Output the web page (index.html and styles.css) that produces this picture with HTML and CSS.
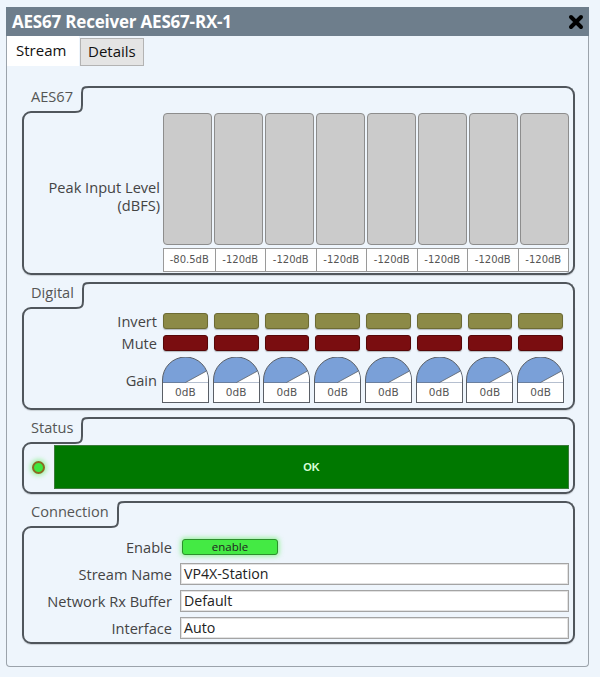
FILE: index.html
```html
<!DOCTYPE html>
<html lang="en">
<head>
    <meta charset="UTF-8">
    <title>AES67 Receiver AES67-RX-1</title>
    <link rel="stylesheet" href="styles.css">
</head>
<body>

    <div class="window">
        <div class="titlebar">
            <span class="title">AES67 Receiver AES67-RX-1</span>
            <svg class="close" viewBox="0 0 16 16" width="16" height="16">
                <path d="M3 3 L13 13 M13 3 L3 13" stroke="#000" stroke-width="4" stroke-linecap="round"/>
            </svg>
        </div>

        <div class="tabs">
            <div class="tab active">Stream</div>
            <div class="tab">Details</div>
        </div>

        <div class="content">

            <!-- AES67 meters -->
            <section class="grp">
                <div class="grp-head">
                    <span class="grp-name">AES67</span>
                    <svg class="step" viewBox="0 0 14 27" width="14" height="27">
                        <path d="M0 27 L0 25 C6 25 7 24 7 19 L7 7 C7 2 8 1 14 1 L14 27 Z" fill="#eef5fc"/>
                        <path d="M0 26 C6 26 7 24 7 19 L7 7 C7 2 8 1 14 1" fill="none" stroke="#50565c" stroke-width="2"/>
                    </svg>
                    <div class="grp-tab"></div>
                </div>
                <div class="grp-body aes">
                    <div class="row-label two-line">Peak Input Level<br>(dBFS)</div>
                    <div class="meters">
                        <div class="bars">
                            <div class="bar"></div>
                            <div class="bar"></div>
                            <div class="bar"></div>
                            <div class="bar"></div>
                            <div class="bar"></div>
                            <div class="bar"></div>
                            <div class="bar"></div>
                            <div class="bar"></div>
                        </div>
                        <div class="vals">
                            <span>-80.5dB</span>
                            <span>-120dB</span>
                            <span>-120dB</span>
                            <span>-120dB</span>
                            <span>-120dB</span>
                            <span>-120dB</span>
                            <span>-120dB</span>
                            <span>-120dB</span>
                        </div>
                    </div>
                </div>
            </section>

            <!-- Digital -->
            <section class="grp">
                <div class="grp-head">
                    <span class="grp-name">Digital</span>
                    <svg class="step" viewBox="0 0 14 27" width="14" height="27">
                        <path d="M0 27 L0 25 C6 25 7 24 7 19 L7 7 C7 2 8 1 14 1 L14 27 Z" fill="#eef5fc"/>
                        <path d="M0 26 C6 26 7 24 7 19 L7 7 C7 2 8 1 14 1" fill="none" stroke="#50565c" stroke-width="2"/>
                    </svg>
                    <div class="grp-tab"></div>
                </div>
                <div class="grp-body digital" id="digital">
                    <div class="row-label">Invert</div>
                    <div class="btn invert"></div><div class="btn invert"></div><div class="btn invert"></div><div class="btn invert"></div>
                    <div class="btn invert"></div><div class="btn invert"></div><div class="btn invert"></div><div class="btn invert"></div>

                    <div class="row-label">Mute</div>
                    <div class="btn mute"></div><div class="btn mute"></div><div class="btn mute"></div><div class="btn mute"></div>
                    <div class="btn mute"></div><div class="btn mute"></div><div class="btn mute"></div><div class="btn mute"></div>

                    <div class="row-label">Gain</div>
                </div>
            </section>

            <!-- Status -->
            <section class="grp">
                <div class="grp-head">
                    <span class="grp-name">Status</span>
                    <svg class="step" viewBox="0 0 14 27" width="14" height="27">
                        <path d="M0 27 L0 25 C6 25 7 24 7 19 L7 7 C7 2 8 1 14 1 L14 27 Z" fill="#eef5fc"/>
                        <path d="M0 26 C6 26 7 24 7 19 L7 7 C7 2 8 1 14 1" fill="none" stroke="#50565c" stroke-width="2"/>
                    </svg>
                    <div class="grp-tab"></div>
                </div>
                <div class="grp-body status">
                    <div class="led"></div>
                    <div class="status-bar">OK</div>
                </div>
            </section>

            <!-- Connection -->
            <section class="grp">
                <div class="grp-head">
                    <span class="grp-name">Connection</span>
                    <svg class="step" viewBox="0 0 14 27" width="14" height="27">
                        <path d="M0 27 L0 25 C6 25 7 24 7 19 L7 7 C7 2 8 1 14 1 L14 27 Z" fill="#eef5fc"/>
                        <path d="M0 26 C6 26 7 24 7 19 L7 7 C7 2 8 1 14 1" fill="none" stroke="#50565c" stroke-width="2"/>
                    </svg>
                    <div class="grp-tab"></div>
                </div>
                <div class="grp-body connection">
                    <div class="row-label">Enable</div>
                    <div><div class="enable">enable</div></div>

                    <div class="row-label">Stream Name</div>
                    <div class="field">VP4X-Station</div>

                    <div class="row-label">Network Rx Buffer</div>
                    <div class="field">Default</div>

                    <div class="row-label">Interface</div>
                    <div class="field">Auto</div>
                </div>
            </section>

        </div>
    </div>

    <script>
        // gain knobs, all at 0dB
        var digital = document.getElementById('digital');
        for (var i = 0; i < 8; i++) {
            var k = document.createElement('div');
            k.className = 'knob';
            k.innerHTML =
                '<svg viewBox="0 0 47 26" width="47" height="26">' +
                '<path d="M0.5 26 L0.5 23 A23 23 0 0 1 46.5 23 L46.5 26 Z" fill="#7aa0d8" stroke="#5a5f66" stroke-width="1"/>' +
                '<path d="M23.5 25.5 L44.2 14.2 A23 23 0 0 1 46 21 L46 25.5 Z" fill="#fff"/>' +
                '<path d="M23.5 25.5 L44.2 14.2" stroke="#5a5f66" stroke-width="0.8"/>' +
                '</svg>' +
                '<div class="knob-val">0dB</div>';
            digital.appendChild(k);
        }
    </script>

</body>
</html>
```

FILE: styles.css
```css
body {
    margin: 0;
    padding: 7px 0 0 6px;
    background-color: #eef5fc;
    font-family: "Open Sans", "Noto Sans", sans-serif;
    color: #444;
}

.window {
    width: 581px;
    height: 659px;
    border: 1px solid #9ba3ab;
    border-top: none;
    border-radius: 0 0 4px 4px;
    display: flex;
    flex-direction: column;
}

/* title bar */
.titlebar {
    height: 29px;
    background-color: #6e7e8c;
    display: flex;
    align-items: center;
    justify-content: space-between;
    padding: 0 5px 0 6px;
    margin: 0 -1px;
}

.title {
    color: #fff;
    font-weight: bold;
    font-size: 17px;
    letter-spacing: -0.2px;
}

.close {
    display: block;
}

/* tabs */
.tabs {
    display: flex;
    align-items: flex-start;
    height: 30px;
}

.tab {
    font-size: 15px;
    color: #111;
    padding: 0 7px;
    height: 26px;
    line-height: 25px;
    margin-top: 2px;
    margin-left: 1px;
    background-color: #e4e4e4;
    border: 1px solid #b3b3b3;
}

.tab.active {
    background-color: #fff;
    border: none;
    height: 30px;
    line-height: 28px;
    margin: 0;
    padding: 0 9px;
    width: 54px;
}

.content {
    padding: 20px 13px 0 15px;
    display: flex;
    flex-direction: column;
    gap: 7px;
}

/* group frame */
.grp-head {
    display: flex;
    height: 27px;
    margin-bottom: -2px;
    position: relative;
    z-index: 1;
}

.grp-name {
    font-size: 14.6px;
    color: #555;
    padding: 2px 2px 0 9px;
    line-height: 17px;
}

.step {
    flex: none;
    display: block;
}

.grp-tab {
    flex: 1;
    border-top: 2px solid #50565c;
    border-right: 2px solid #50565c;
    border-top-right-radius: 9px;
    background-color: #eef5fc;
}

.grp-body {
    border: 2px solid #50565c;
    border-radius: 9px 0 9px 9px;
    box-shadow: 0 1px 1px rgba(0, 0, 0, 0.15);
}

.row-label {
    font-size: 14.6px;
    color: #444;
    text-align: right;
    line-height: 16px;
    white-space: nowrap;
}

.row-label.two-line {
    line-height: 18px;
    padding-top: 6px;
}

/* meters */
.aes {
    display: grid;
    grid-template-columns: 136px 406px;
    column-gap: 3px;
    align-items: center;
    padding: 0 4px 1px 0;
}

.bars {
    display: grid;
    grid-template-columns: repeat(8, 1fr);
    column-gap: 2px;
}

.bar {
    height: 132px;
    background-color: #cbcbcb;
    border: 1px solid #8d8d8d;
    border-radius: 4px;
    box-sizing: border-box;
}

.vals {
    display: grid;
    grid-template-columns: repeat(8, 1fr);
    margin-top: 3px;
    border: 1px solid #9a9a9a;
    background-color: #fff;
}

.vals span {
    font-family: "DejaVu Sans", sans-serif;
    font-size: 10px;
    color: #555;
    text-align: center;
    height: 22px;
    line-height: 22px;
    border-left: 1px solid #9a9a9a;
}

.vals span:first-child {
    border-left: none;
}

/* digital */
.digital {
    display: grid;
    grid-template-columns: 136px repeat(8, 50.75px);
    grid-template-rows: 16px 16px 45px;
    row-gap: 6px;
    align-items: center;
    padding: 4px 4px 6px 0;
}

.digital .row-label {
    padding-right: 3px;
}

.btn {
    height: 16px;
    margin: 0 3px;
    border-radius: 3px;
    box-sizing: border-box;
}

.invert {
    background-color: #8c8a47;
    border: 1px solid #6d6b34;
    box-shadow: 0 1px 1px rgba(0, 0, 0, 0.25);
}

.mute {
    background-color: #7a0d10;
    border: 1px solid #560708;
    box-shadow: 0 1px 1px rgba(0, 0, 0, 0.25);
}

.knob {
    width: 47px;
    justify-self: center;
}

.knob svg {
    display: block;
}

.knob-val {
    height: 19px;
    border: 1px solid #5a5f66;
    border-top: none;
    background-color: #fff;
    font-family: "DejaVu Sans", sans-serif;
    font-size: 10.5px;
    color: #555;
    text-align: center;
    line-height: 19px;
}

/* status */
.status {
    display: flex;
    align-items: center;
    padding: 1px 4px 3px 8px;
}

.led {
    width: 9px;
    height: 9px;
    border-radius: 50%;
    background-color: #3fe83f;
    border: 2px solid #8a6a22;
    box-shadow: 0 0 4px 2px rgba(120, 240, 120, 0.6);
    margin-right: 9px;
}

.status-bar {
    flex: 1;
    height: 42px;
    background-color: #007800;
    border: 1px solid #3b7a3b;
    color: #d6ffd6;
    font-family: "Liberation Sans", sans-serif;
    font-weight: bold;
    font-size: 11px;
    display: flex;
    align-items: center;
    justify-content: center;
}

/* connection */
.connection {
    display: grid;
    grid-template-columns: 148px 1fr;
    grid-auto-rows: 27px;
    column-gap: 8px;
    align-items: center;
    padding: 5px 4px 1px 0;
}

.enable {
    width: 96px;
    height: 16px;
    margin-left: 2px;
    box-sizing: border-box;
    background-color: #44ea44;
    border: 1px solid #2d8f2d;
    border-radius: 3px;
    box-shadow: 0 0 5px 1px rgba(100, 240, 100, 0.7);
    font-size: 11.5px;
    color: #222;
    text-align: center;
    line-height: 14px;
}

.field {
    height: 22px;
    box-sizing: border-box;
    background-color: #fff;
    border: 1px solid #a4a4a4;
    box-shadow: inset 0 0 0 1px #e2e2e2;
    font-size: 14.2px;
    color: #222;
    padding-left: 3px;
    line-height: 20px;
}
```
